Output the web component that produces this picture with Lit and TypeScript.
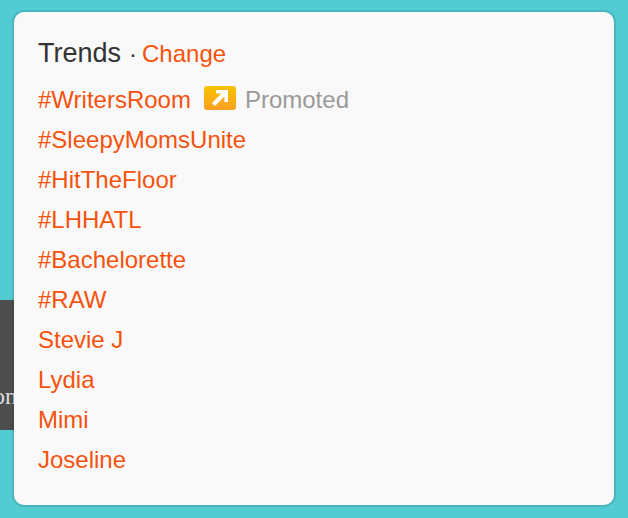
import { LitElement, html, css } from "lit";
import { customElement, state } from "lit/decorators.js";

interface Trend {
  name: string;
  promoted?: boolean;
}

@customElement("promoted-badge")
class PromotedBadge extends LitElement {
  static styles = css`
    :host {
      display: inline-flex;
      align-items: flex-start;
      gap: 9px;
      color: #999;
    }
    .icon {
      display: block;
      width: 32px;
      height: 24px;
      margin-top: 2px;
    }
    .label {
      line-height: 32px;
    }
  `;

  render() {
    return html`
      <svg class="icon" viewBox="0 0 32 24" aria-hidden="true">
        <defs>
          <linearGradient id="gold" x1="0" y1="0" x2="0" y2="1">
            <stop offset="0" stop-color="#f8c300" />
            <stop offset="1" stop-color="#fb9f22" />
          </linearGradient>
        </defs>
        <rect width="32" height="24" rx="3" fill="url(#gold)" />
        <path d="M12 4H24V16H20.4V10.6L11 20L8 17L17.4 7.6H12Z" fill="#fff" />
      </svg>
      <span class="label">Promoted</span>
    `;
  }
}

@customElement("trends-card")
class TrendsCard extends LitElement {
  static styles = css`
    :host {
      display: block;
      box-sizing: border-box;
      padding: 25px 24px;
      border-radius: 10px;
      background: #f9f9f9;
      box-shadow: 0 0 0 2px rgba(0, 0, 0, 0.1);
      color: #f6520c;
      font-size: 24px;
    }
    .header {
      display: flex;
      align-items: baseline;
      gap: 8px;
      margin-bottom: 10px;
      line-height: 32px;
    }
    .title {
      margin: 0;
      color: #333;
      font-size: 27px;
      font-weight: 400;
    }
    .dot {
      color: #333;
    }
    .change {
      margin-left: -3px;
    }
    a {
      color: inherit;
      text-decoration: none;
    }
    .list {
      margin: 0;
      padding: 0;
      list-style: none;
    }
    .trend {
      display: flex;
      align-items: center;
      gap: 13px;
      height: 40px;
      line-height: 40px;
    }
  `;

  @state() private trends: Trend[] = [
    { name: "#WritersRoom", promoted: true },
    { name: "#SleepyMomsUnite" },
    { name: "#HitTheFloor" },
    { name: "#LHHATL" },
    { name: "#Bachelorette" },
    { name: "#RAW" },
    { name: "Stevie J" },
    { name: "Lydia" },
    { name: "Mimi" },
    { name: "Joseline" },
  ];

  render() {
    return html`
      <div class="header">
        <h3 class="title">Trends</h3>
        <span class="dot">·</span>
        <a class="change" href="#">Change</a>
      </div>
      <ul class="list">
        ${this.trends.map(
          (t) => html`<li class="trend">
            <a href="#">${t.name}</a>
            ${t.promoted ? html`<promoted-badge></promoted-badge>` : null}
          </li>`
        )}
      </ul>
    `;
  }
}

@customElement("app-root")
class AppRoot extends LitElement {
  static styles = css`
    :host {
      display: block;
      position: relative;
      box-sizing: border-box;
      min-height: 100vh;
      padding: 12px 14px 14px;
      overflow: hidden;
      background: #52cbd3;
      font-family: "Helvetica Neue", "Liberation Sans", Arial, sans-serif;
    }
    .backdrop {
      position: absolute;
      top: 300px;
      left: 0;
      box-sizing: border-box;
      width: 40px;
      height: 130px;
      padding-top: 84px;
      background: #4d4d4d;
      color: #ddd;
      font: 24px/24px "Liberation Serif", serif;
      text-indent: -7px;
    }
    .card {
      position: relative;
    }
  `;

  render() {
    return html`
      <div class="backdrop" aria-hidden="true">on</div>
      <trends-card class="card"></trends-card>
    `;
  }
}
